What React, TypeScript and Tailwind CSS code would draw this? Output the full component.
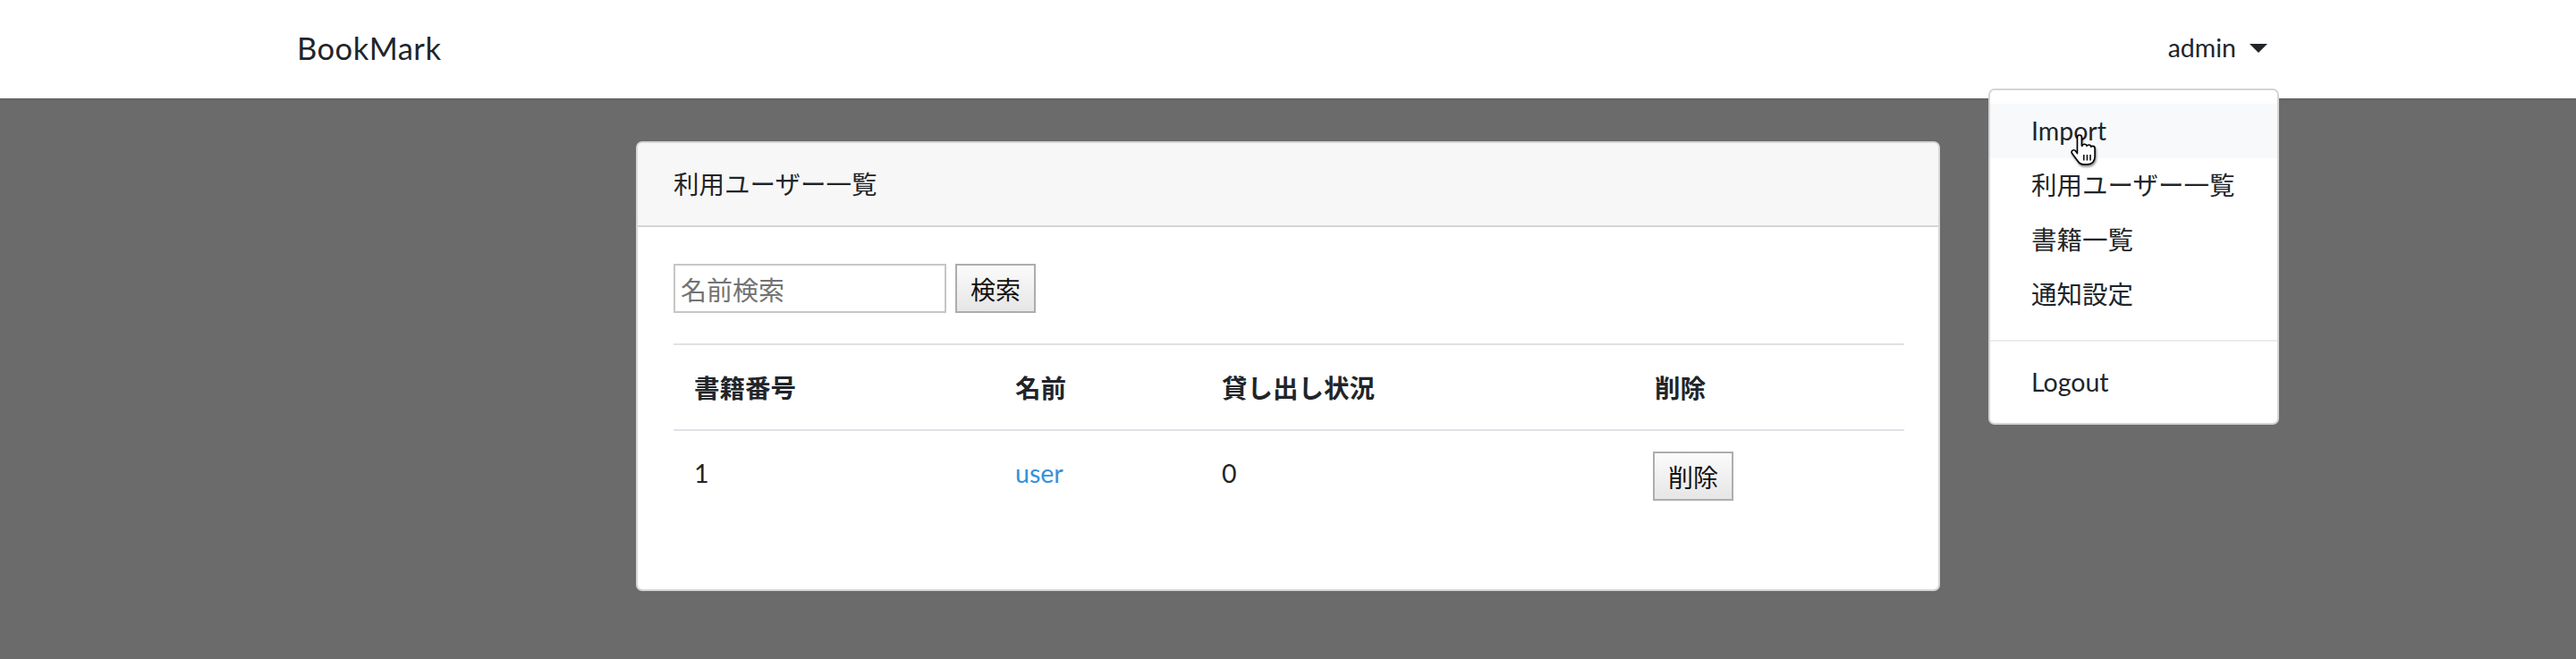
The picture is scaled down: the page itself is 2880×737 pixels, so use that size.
import React from "react";

const menuItems = ["Import", "利用ユーザー一覧", "書籍一覧", "通知設定"];

const HandCursor = () => (
  <svg
    width="34"
    height="36"
    viewBox="0 0 20 22"
    className="absolute left-[2312px] top-[150px] z-30 drop-shadow-[1px_2px_1px_rgba(0,0,0,0.45)]"
  >
    <path
      d="M6 2.2c0-.9.6-1.6 1.5-1.6S9 1.3 9 2.2V8h.4c.2-.7.8-1.1 1.5-1.1.8 0 1.4.5 1.5 1.2.3-.5.8-.8 1.4-.8.8 0 1.5.6 1.5 1.4.3-.3.7-.5 1.2-.5.9 0 1.5.7 1.5 1.6V15.5c0 3-2 5.2-5 5.2h-3c-1.5 0-2.6-.7-3.4-1.9L2.4 13.2c-.5-.8-.3-1.7.4-2.1.7-.4 1.6-.2 2.1.5L6 13.2Z"
      fill="#fff"
      stroke="#000"
      strokeWidth="1"
      strokeLinejoin="round"
    />
    <path d="M10.5 14v4M12.7 14v4M14.9 14v4" stroke="#000" strokeWidth="0.9" />
  </svg>
);

const OldButton = ({ label }: { label: string }) => (
  <button className="h-[55px] px-[15px] border-2 border-[#adadad] bg-gradient-to-b from-[#fbfbfb] to-[#e6e6e6] text-[28px] leading-none text-[#111] font-['Noto_Sans_CJK_JP',sans-serif]">
    {label}
  </button>
);

export default function App() {
  return (
    <div className="relative w-[2880px] h-[737px] overflow-hidden bg-[#6b6b6b] text-[#212529] font-['Lato','Noto_Sans_CJK_JP',sans-serif]">
      <nav className="h-[110px] bg-white shadow-sm">
        <div className="relative mx-auto flex h-full w-[2216px] items-center justify-between">
          <span className="text-[34.5px] leading-none tracking-[0.5px] pb-[2px]">BookMark</span>
          <span className="flex items-center gap-[15px] pr-[13px] pb-[4px] text-[28.5px] leading-none">
            admin
            <span className="mt-[2px] h-0 w-0 border-x-[10px] border-t-[10px] border-x-transparent border-t-[#212529]" />
          </span>

          <div className="absolute right-0 top-[99px] z-10 w-[325px] rounded-[7px] border-2 border-[#d4d4d4] bg-white py-[15px]">
            {menuItems.map((item, idx) => (
              <div
                key={idx}
                className={
                  "flex h-[61px] items-center pl-[46px] text-[28.5px] " +
                  (idx === 0 ? "bg-[#f8f9fa]" : "")
                }
              >
                {item}
              </div>
            ))}
            <div className="mt-[20px] mb-[15px] h-[2px] bg-[#e9ecef]" />
            <div className="flex h-[61px] items-center pl-[46px] text-[28.5px]">Logout</div>
          </div>
        </div>
      </nav>

      <main className="flex justify-center pt-[48px]">
        <div className="w-[1458px] h-[503px] rounded-[7px] border-2 border-[#d6d6d6] bg-white overflow-hidden">
          <div className="flex h-[94px] items-center border-b-2 border-[#d6d6d6] bg-[#f7f7f7] pl-[40px] text-[28.5px]">
            利用ユーザー一覧
          </div>
          <div className="px-[40px] pt-[41px]">
            <div className="flex items-center gap-[10px]">
              <input
                placeholder="名前検索"
                className="h-[55px] w-[305px] border-2 border-[#c6c6c6] px-[6px] text-[29px] font-['Noto_Sans_CJK_JP',sans-serif] placeholder:text-[#737373] outline-none"
              />
              <OldButton label="検索" />
            </div>

            <table className="mt-[34px] w-[1376px] table-fixed border-collapse text-[28.5px]">
              <colgroup>
                <col className="w-[359px]" />
                <col className="w-[231px]" />
                <col className="w-[484px]" />
                <col className="w-[302px]" />
              </colgroup>
              <thead>
                <tr className="border-y-2 border-[#dee2e6]">
                  <th className="h-[96px] pl-[23px] text-left font-['Noto_Sans_CJK_JP',sans-serif] font-bold">書籍番号</th>
                  <th className="pl-[23px] text-left font-['Noto_Sans_CJK_JP',sans-serif] font-bold">名前</th>
                  <th className="pl-[23px] text-left font-['Noto_Sans_CJK_JP',sans-serif] font-bold">貸し出し状況</th>
                  <th className="pl-[23px] text-left font-['Noto_Sans_CJK_JP',sans-serif] font-bold">削除</th>
                </tr>
              </thead>
              <tbody>
                <tr className="align-top">
                  <td className="pl-[23px] pt-[25px] pb-[20px] leading-[45px]">1</td>
                  <td className="pl-[23px] pt-[25px] leading-[45px]">
                    <a className="text-[#3490dc]">user</a>
                  </td>
                  <td className="pl-[23px] pt-[25px] leading-[45px]">0</td>
                  <td className="pl-[21px] pt-[23px]">
                    <OldButton label="削除" />
                  </td>
                </tr>
              </tbody>
            </table>
          </div>
        </div>
      </main>

      <HandCursor />
    </div>
  );
}
